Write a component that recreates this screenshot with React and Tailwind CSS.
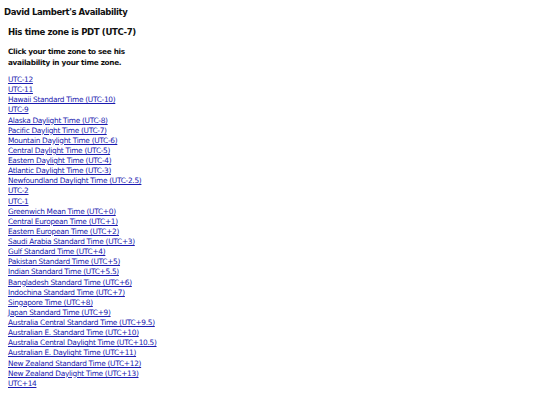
import React from "react";

const zones = [
  "UTC-12",
  "UTC-11",
  "Hawaii Standard Time (UTC-10)",
  "UTC-9",
  "Alaska Daylight Time (UTC-8)",
  "Pacific Daylight Time (UTC-7)",
  "Mountain Daylight Time (UTC-6)",
  "Central Daylight Time (UTC-5)",
  "Eastern Daylight Time (UTC-4)",
  "Atlantic Daylight Time (UTC-3)",
  "Newfoundland Daylight Time (UTC-2.5)",
  "UTC-2",
  "UTC-1",
  "Greenwich Mean Time (UTC+0)",
  "Central European Time (UTC+1)",
  "Eastern European Time (UTC+2)",
  "Saudi Arabia Standard Time (UTC+3)",
  "Gulf Standard Time (UTC+4)",
  "Pakistan Standard Time (UTC+5)",
  "Indian Standard Time (UTC+5.5)",
  "Bangladesh Standard Time (UTC+6)",
  "Indochina Standard Time (UTC+7)",
  "Singapore Time (UTC+8)",
  "Japan Standard Time (UTC+9)",
  "Australia Central Standard Time (UTC+9.5)",
  "Australian E. Standard Time (UTC+10)",
  "Australia Central Daylight Time (UTC+10.5)",
  "Australian E. Daylight Time (UTC+11)",
  "New Zealand Standard Time (UTC+12)",
  "New Zealand Daylight Time (UTC+13)",
  "UTC+14",
];

export default function App() {
  return (
    <div className="w-[540px] h-[405px] bg-white text-[#111] font-['DejaVu_Sans',Verdana,sans-serif] overflow-hidden">
      <div className="pl-[4px] pt-[7px] text-[8.5px] leading-[11px] tracking-[-0.4px] font-bold">David Lambert's Availability</div>
      <div className="pl-[8px]">
        <h2 className="mt-[8px] text-[8.6px] leading-[12px] tracking-[-0.4px] font-bold">His time zone is PDT (UTC-7)</h2>
        <p className="mt-[8px] w-[126px] text-[7.3px] leading-[11px] tracking-[-0.3px] font-bold">
          Click your time zone to see his availability in your time zone.
        </p>
        <ul className="mt-[7px] flex flex-col">
          {zones.map((z) => (
            <li key={z} className="text-[7.4px] leading-[10.13px] tracking-[-0.3px]">
              <a href="#" className="text-[#1a1ab0] underline">{z}</a>
            </li>
          ))}
        </ul>
      </div>
    </div>
  );
}
